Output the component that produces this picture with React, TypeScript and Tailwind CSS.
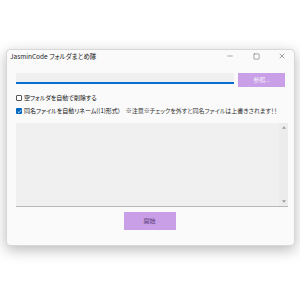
import { Minus, Square, X } from "lucide-react";

export default function App() {
  return (
    <div className="h-[300px] w-[300px] bg-white pt-[49px] pl-[6px] font-['Noto_Sans_CJK_JP','Noto_Sans',sans-serif] [font-feature-settings:'palt']">
      {/* ウィンドウ */}
      <div className="flex h-[197px] w-[289px] flex-col rounded-[4px] border border-[#d8d8d8] bg-[#fafafa] shadow-[0_4px_14px_rgba(0,0,0,0.28)]">
        {/* タイトルバー */}
        <div className="flex h-[12px] items-center pl-[3px]">
          <span className="flex-1 text-[6.5px] leading-none text-[#222]">JasminCode フォルダまとめ隊</span>
          <div className="flex items-center">
            <div className="flex w-[26px] justify-center">
              <Minus size={8} strokeWidth={1.2} color="#333" />
            </div>
            <div className="flex w-[26px] justify-center">
              <Square size={7} strokeWidth={1.4} color="#333" />
            </div>
            <div className="flex w-[25px] justify-center">
              <X size={8} strokeWidth={1.4} color="#333" />
            </div>
          </div>
        </div>

        <div className="flex flex-1 flex-col px-[9px] pt-[11px]">
          {/* フォルダ選択 */}
          <div className="flex items-start gap-[4px]">
            <div className="h-[11px] w-[220px] border-b-2 border-[#0a6fd0] bg-[#f0f0f0]" />
            <button className="flex h-[14px] w-[47px] items-center justify-center bg-[#c9a0e8] text-[6px] leading-none text-[#f4ecfb]">
              参照...
            </button>
          </div>

          {/* チェックボックス */}
          <div className="mt-[8px] flex items-center gap-[2px]">
            <div className="h-[6px] w-[6px] rounded-[1px] border border-[#555] bg-white" />
            <span className="text-[6px] leading-none text-[#111]">空フォルダを自動で削除する</span>
          </div>
          <div className="mt-[7px] flex items-center gap-[2px]">
            <div className="flex h-[6px] w-[6px] items-center justify-center rounded-[1px] bg-[#0067c0]">
              <svg viewBox="0 0 6 6" className="h-[5px] w-[5px]">
                <path d="M1 3.2 L2.4 4.5 L5 1.5" fill="none" stroke="white" strokeWidth="0.9" />
              </svg>
            </div>
            <span className="whitespace-nowrap text-[6px] leading-none text-[#111]">
              同名ファイルを自動リネーム((1)形式)　<span className="text-[#333]">{"※\uFE0E注意※\uFE0Eチェックを外すと同名ファイルは上書きされます！！"}</span>
            </span>
          </div>

          {/* ログ */}
          <div className="mt-[9px] flex h-[84px] w-[272px] border-b border-[#b8b8b8] bg-[#f0f0f0]">
            <div className="flex-1" />
            <div className="flex w-[9px] flex-col items-center justify-between bg-[#ececec] py-[3px]">
              <svg viewBox="0 0 6 4" className="h-[3px] w-[4px]">
                <path d="M0 4 L3 0 L6 4 Z" fill="#999" />
              </svg>
              <svg viewBox="0 0 6 4" className="h-[3px] w-[4px]">
                <path d="M0 0 L3 4 L6 0 Z" fill="#999" />
              </svg>
            </div>
          </div>

          {/* 開始 */}
          <div className="mt-[5px] flex justify-center">
            <button className="mr-[2px] flex h-[18px] w-[52px] items-center justify-center bg-[#c9a0e8] text-[6px] leading-none text-[#5b3a78]">
              開始
            </button>
          </div>
        </div>
      </div>
    </div>
  );
}
